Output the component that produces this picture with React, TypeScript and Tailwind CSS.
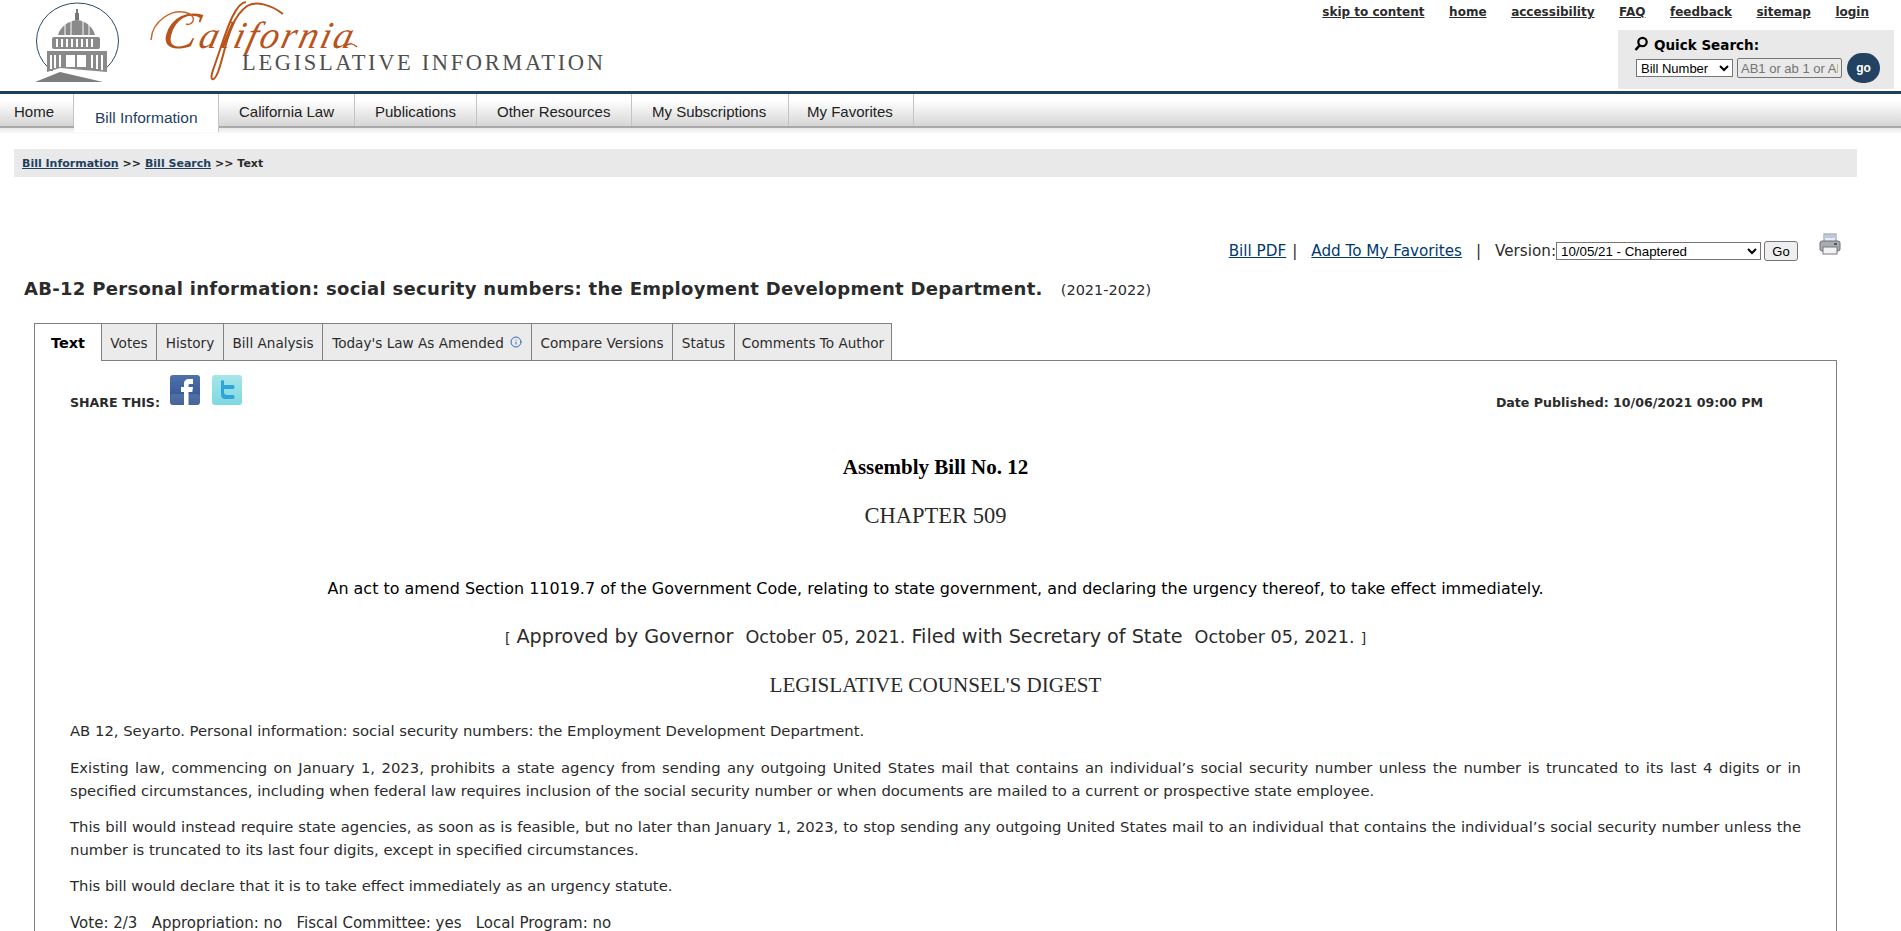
import { Info } from 'lucide-react';

const topLinks = ['skip to content', 'home', 'accessibility', 'FAQ', 'feedback', 'sitemap', 'login'];

const navItems = [
  { label: 'Home', cls: 'w-[74px] pl-[14px]' },
  { label: 'Bill Information', cls: 'w-[145px] pl-[21px] text-[15.5px]', active: true },
  { label: 'California Law', cls: 'w-[136px] pl-[20px]' },
  { label: 'Publications', cls: 'w-[122px] pl-[20px]' },
  { label: 'Other Resources', cls: 'w-[155px] pl-[20px]' },
  { label: 'My Subscriptions', cls: 'w-[157px] pl-[20px]' },
  { label: 'My Favorites', cls: 'w-[125px] pl-[18px]' },
];

const tabs = [
  { label: 'Votes', cls: 'w-[55px]' },
  { label: 'History', cls: 'w-[67px]' },
  { label: 'Bill Analysis', cls: 'w-[99px]' },
  { label: "Today's Law As Amended", cls: 'w-[209px]', info: true },
  { label: 'Compare Versions', cls: 'w-[141px]' },
  { label: 'Status', cls: 'w-[62px]' },
  { label: 'Comments To Author', cls: 'w-[157px]' },
];

function Logo() {
  return (
    <svg width="620" height="91" viewBox="0 0 620 91" className="block">
      <ellipse cx="77.500" cy="41" rx="41" ry="38" fill="none" stroke="#2b4a68" strokeWidth="1" />
      <rect x="38" y="71" width="79" height="10" fill="#fff" />
      <path d="M35 82 L60 72 L103 82 Z" fill="#7d7d7d" />
      <path d="M76 9h2v4h1v7h-4v-7h1z" fill="#777" />
      <path d="M58 35 C60 27 68 21 77 20 C86 21 93 27 95 35 Z" fill="#8a8a8a" />
      <path d="M71 21v14M83 21v14M65 25v10M89 25v10" stroke="#fff" strokeWidth="1" />
      <rect x="52" y="37" width="48" height="12" rx="2" fill="#8a8a8a" />
      <path d="M57 39v8M62 39v8M67 39v8M72 39v8M77 39v8M82 39v8M87 39v8M92 39v8" stroke="#fff" strokeWidth="2" />
      <path d="M47 51 H107 V72 L60 68 L47 72 Z" fill="#8a8a8a" />
      <path d="M51 55v14M55 55v13M60 55v12M92 55v13M97 55v14M102 55v15" stroke="#fff" strokeWidth="2" />
      <rect x="66" y="55" width="20" height="12" fill="#fff" />
      <rect x="75" y="55" width="2" height="12" fill="#8a8a8a" />
      <text x="160" y="48" transform="skewX(-14) translate(12 0)" fontFamily="'Liberation Serif', serif" fontStyle="italic" fill="#b9531c" letterSpacing="2.500">
        <tspan fontSize="52">C</tspan>
        <tspan fontSize="38">alifornia</tspan>
      </text>
      <path d="M246 2 C233 3 224 40 213 70 C209 82 214 82 218 72 C226 50 228 20 247 6 C256 1 270 4 283 14" fill="none" stroke="#b9531c" strokeWidth="2" />
      <path d="M151 40 C152 22 172 6 190 14 C198 20 190 26 186 24" fill="none" stroke="#c8662c" strokeWidth="1.500" />
      <path d="M345 46 C350 43 353 43 357 47" fill="none" stroke="#b9531c" strokeWidth="1.500" />
      <text x="242" y="70" fontFamily="'Liberation Serif', serif" fontSize="22.5" textLength="361" fill="#4f4f4f">
        LEGISLATIVE INFORMATION
      </text>
    </svg>
  );
}

function FacebookIcon() {
  return (
    <svg width="30" height="30" viewBox="0 0 30 30">
      <defs>
        <linearGradient id="fb" x1="0" y1="0" x2="0" y2="1">
          <stop offset="0" stopColor="#4f72ab" />
          <stop offset="1" stopColor="#2e4f8c" />
        </linearGradient>
      </defs>
      <rect width="30" height="30" rx="3" fill="url(#fb)" />
      <rect y="19" width="30" height="11" rx="3" fill="#ffffff" fillOpacity="0.12" />
      <path d="M14 30V17h-3v-5h3V9c0-3.500 2-5 5-5h4v5h-3c-1 0-1.500.5-1.500 1.500V12H23l-.7 5h-3.800v13z" fill="#fff" />
    </svg>
  );
}

function TwitterIcon() {
  return (
    <svg width="30" height="30" viewBox="0 0 30 30">
      <defs>
        <linearGradient id="tw" x1="0" y1="0" x2="0" y2="1">
          <stop offset="0" stopColor="#a5e6ea" />
          <stop offset="1" stopColor="#7ed8e2" />
        </linearGradient>
      </defs>
      <rect width="30" height="30" rx="3" fill="url(#tw)" />
      <path d="M9 6c0-1 3-1 3 0v4h9c2 0 2 4 0 4h-9v3c0 2 1 3 3 3h6c2 0 2 4 0 4h-7c-4 0-5-2-5-6z" fill="#2fa4d8" />
    </svg>
  );
}

function PrintIcon() {
  return (
    <svg width="22" height="22" viewBox="0 0 22 22">
      <rect x="5" y="1" width="12" height="9" fill="#e8edf3" stroke="#8b8f94" />
      <rect x="5" y="2" width="12" height="3" fill="#b9c8dc" />
      <rect x="1" y="8" width="20" height="10" rx="2" fill="#a9adb2" stroke="#6d7176" />
      <rect x="4" y="14" width="14" height="7" fill="#f2f2f2" stroke="#75797e" />
      <rect x="15" y="10" width="3" height="2" fill="#555" />
    </svg>
  );
}

export default function App() {
  return (
    <div className="h-[931px] overflow-hidden bg-white text-[#2b2b2b] font-['DejaVu_Sans',Verdana,sans-serif]">
      <div className="flex h-[91px] justify-between">
        <Logo />
        <div className="flex flex-col items-end pr-[7px]">
          <div className="flex h-[30px] gap-[24.6px] pt-[3px] pr-[25px] text-[12px] font-bold leading-[18px]">
            {topLinks.map(l => (
              <a key={l} href="#" className="underline">{l}</a>
            ))}
          </div>
          <div className="h-[59px] w-[276px] bg-[#e9e9e9] pl-[15px] pt-[6px]">
            <div className="flex items-center gap-[5px] text-[13.5px] font-bold leading-[18px] text-black">
              <svg width="16" height="16" viewBox="0 0 16 16" className="-mt-[3px]">
                <circle cx="9.500" cy="6" r="4.200" fill="none" stroke="#000" strokeWidth="2.200" />
                <path d="M6.500 9.500 L2.500 14" stroke="#000" strokeWidth="2.600" />
              </svg>
              Quick Search:
            </div>
            <div className="-mt-[1px] ml-[3px] flex items-center font-['Liberation_Sans',Arial,sans-serif] text-[13px]">
              <select className="h-[18px] w-[97px] border border-[#767676] bg-white text-black">
                <option>Bill Number</option>
              </select>
              <input
                placeholder="AB1 or ab 1 or AB 0001"
                className="ml-[4px] h-[20px] w-[105px] rounded-[2px] border border-[#767676] px-[3px] placeholder-[#757575]"
              />
              <span className="ml-[5px] flex h-[30px] w-[33px] items-center justify-center rounded-full bg-[#234261] text-[12px] font-bold text-white">
                go
              </span>
            </div>
          </div>
        </div>
      </div>

      <nav className="relative flex h-[37px] border-t-[3px] border-b-[2px] border-t-[#1f3f5f] border-b-[#a9a9a9] bg-gradient-to-b from-white from-20% to-[#d6d6d6] font-['Liberation_Sans',Arial,sans-serif] text-[15px] text-[#222]">
        {navItems.map(item =>
          item.active ? (
            <a key={item.label} href="#" className={`${item.cls} relative z-10 -mb-[6px] h-[38px] border-r border-[#c4c4c4] bg-white pt-[12px] text-[#1f3f5f]`}>
              {item.label}
            </a>
          ) : (
            <a key={item.label} href="#" className={`${item.cls} h-[32px] border-r border-[#c4c4c4] pt-[7px]`}>
              {item.label}
            </a>
          ),
        )}
      </nav>

      <div className="h-[6px] bg-gradient-to-b from-[#e8e8e8] to-white" />

      <div className="mx-[14px] mt-[15px] flex h-[28px] w-[1843px] items-center bg-[#e9e9e9] px-[8px] pt-[2px] text-[11px] font-bold">
        <a href="#" className="text-[#1f3f5f] underline">Bill Information</a>
        <span className="mx-[4px]">&gt;&gt;</span>
        <a href="#" className="text-[#1f3f5f] underline">Bill Search</a>
        <span className="ml-[4px]">&gt;&gt; Text</span>
      </div>

      <div className="mt-[56px] flex h-[36px] items-center justify-end pr-[103px] text-[15.2px]">
        <a href="#" className="text-[#00396f] underline">Bill PDF</a>
        <span className="ml-[6px]">|</span>
        <a href="#" className="ml-[14px] text-[#00396f] underline">Add To My Favorites</a>
        <span className="mx-[14px]">|</span>
        <span>Version:</span>
        <select className="h-[18px] w-[205px] border border-[#767676] bg-white font-['Liberation_Sans',Arial,sans-serif] text-[13.33px] text-black">
          <option>10/05/21 - Chaptered</option>
        </select>
        <button className="ml-[3px] h-[20px] w-[34px] rounded-[3px] border border-[#767676] bg-[#efefef] font-['Liberation_Sans',Arial,sans-serif] text-[13px] text-black">
          Go
        </button>
        <span className="relative -top-[7px] ml-[21px] -mr-[43px] w-[22px]"><PrintIcon /></span>
      </div>

      <div className="mt-[8px] flex items-baseline pl-[24px]">
        <h1 className="text-[18px] font-bold leading-[24px] tracking-[0.3px]">
          AB-12 Personal information: social security numbers: the Employment Development Department.
        </h1>
        <span className="ml-[18px] text-[14.5px]">(2021-2022)</span>
      </div>

      <div className="ml-[34px] mt-[21px] w-[1803px]">
        <div className="relative z-10 -mb-px flex h-[38px] text-[13.6px]">
          <span className="flex w-[68px] items-center justify-center border border-b-0 border-[#808080] bg-white pt-[3px] text-[14.5px] font-bold text-black">Text</span>
          {tabs.map(t => (
            <span key={t.label} className={`${t.cls} flex h-[37px] items-center justify-center gap-[6px] whitespace-nowrap border-y border-r border-b-0 border-[#808080] bg-[#ebebeb] pt-[3px]`}>
              {t.label}
              {t.info && <Info size={12} className="-mt-[3px] text-[#2f6db0]" />}
            </span>
          ))}
        </div>
        <div className="h-[600px] border border-[#808080] pl-[35px] pr-[35px] text-[14.8px] leading-[22.5px]">
          <div className="relative flex h-[65px] items-start justify-between pr-[38px] pt-[31px] text-[12.6px] font-bold">
            <div className="flex items-center">
              SHARE THIS:
              <div className="absolute left-[100px] top-[14px] flex gap-[12px]">
                <FacebookIcon />
                <TwitterIcon />
              </div>
            </div>
            <span>Date Published: 10/06/2021 09:00 PM</span>
          </div>

          <h2 className="mt-[29px] text-center font-['Liberation_Serif',serif] text-[21px] font-bold leading-[24px] text-black">Assembly Bill No. 12</h2>
          <p className="mt-[25px] text-center font-['Liberation_Serif',serif] text-[22.5px] leading-[24px]">CHAPTER 509</p>
          <p className="mt-[49px] text-center text-[15.95px] leading-[24px] text-black">
            An act to amend Section 11019.7 of the Government Code, relating to state government, and declaring the urgency thereof, to take effect immediately.
          </p>
          <p className="mt-[24px] text-center text-[19.2px] leading-[24px]">
            <span className="text-[14px]">[</span> Approved by Governor <span className="ml-[6px] text-[17.6px]">October 05, 2021.</span> Filed with Secretary of State <span className="ml-[6px] text-[17.6px]">October 05, 2021.</span> <span className="text-[14px]">]</span>
          </p>
          <h3 className="mt-[23px] text-center font-['Liberation_Serif',serif] text-[21.1px] leading-[24px]">LEGISLATIVE COUNSEL'S DIGEST</h3>

          <p className="mt-[23px]">AB 12, Seyarto. Personal information: social security numbers: the Employment Development Department.</p>
          <p className="mt-[15px] text-justify">
            Existing law, commencing on January 1, 2023, prohibits a state agency from sending any outgoing United States mail that contains an individual’s social security number unless the number is truncated to its last 4 digits or in specified circumstances, including when federal law requires inclusion of the social security number or when documents are mailed to a current or prospective state employee.
          </p>
          <p className="mt-[14px] text-justify">
            This bill would instead require state agencies, as soon as is feasible, but no later than January 1, 2023, to stop sending any outgoing United States mail to an individual that contains the individual’s social security number unless the number is truncated to its last four digits, except in specified circumstances.
          </p>
          <p className="mt-[14px]">This bill would declare that it is to take effect immediately as an urgency statute.</p>
          <p className="mt-[14px] whitespace-pre text-[15px]">Vote: 2/3   Appropriation: no   Fiscal Committee: yes   Local Program: no</p>
        </div>
      </div>
    </div>
  );
}
